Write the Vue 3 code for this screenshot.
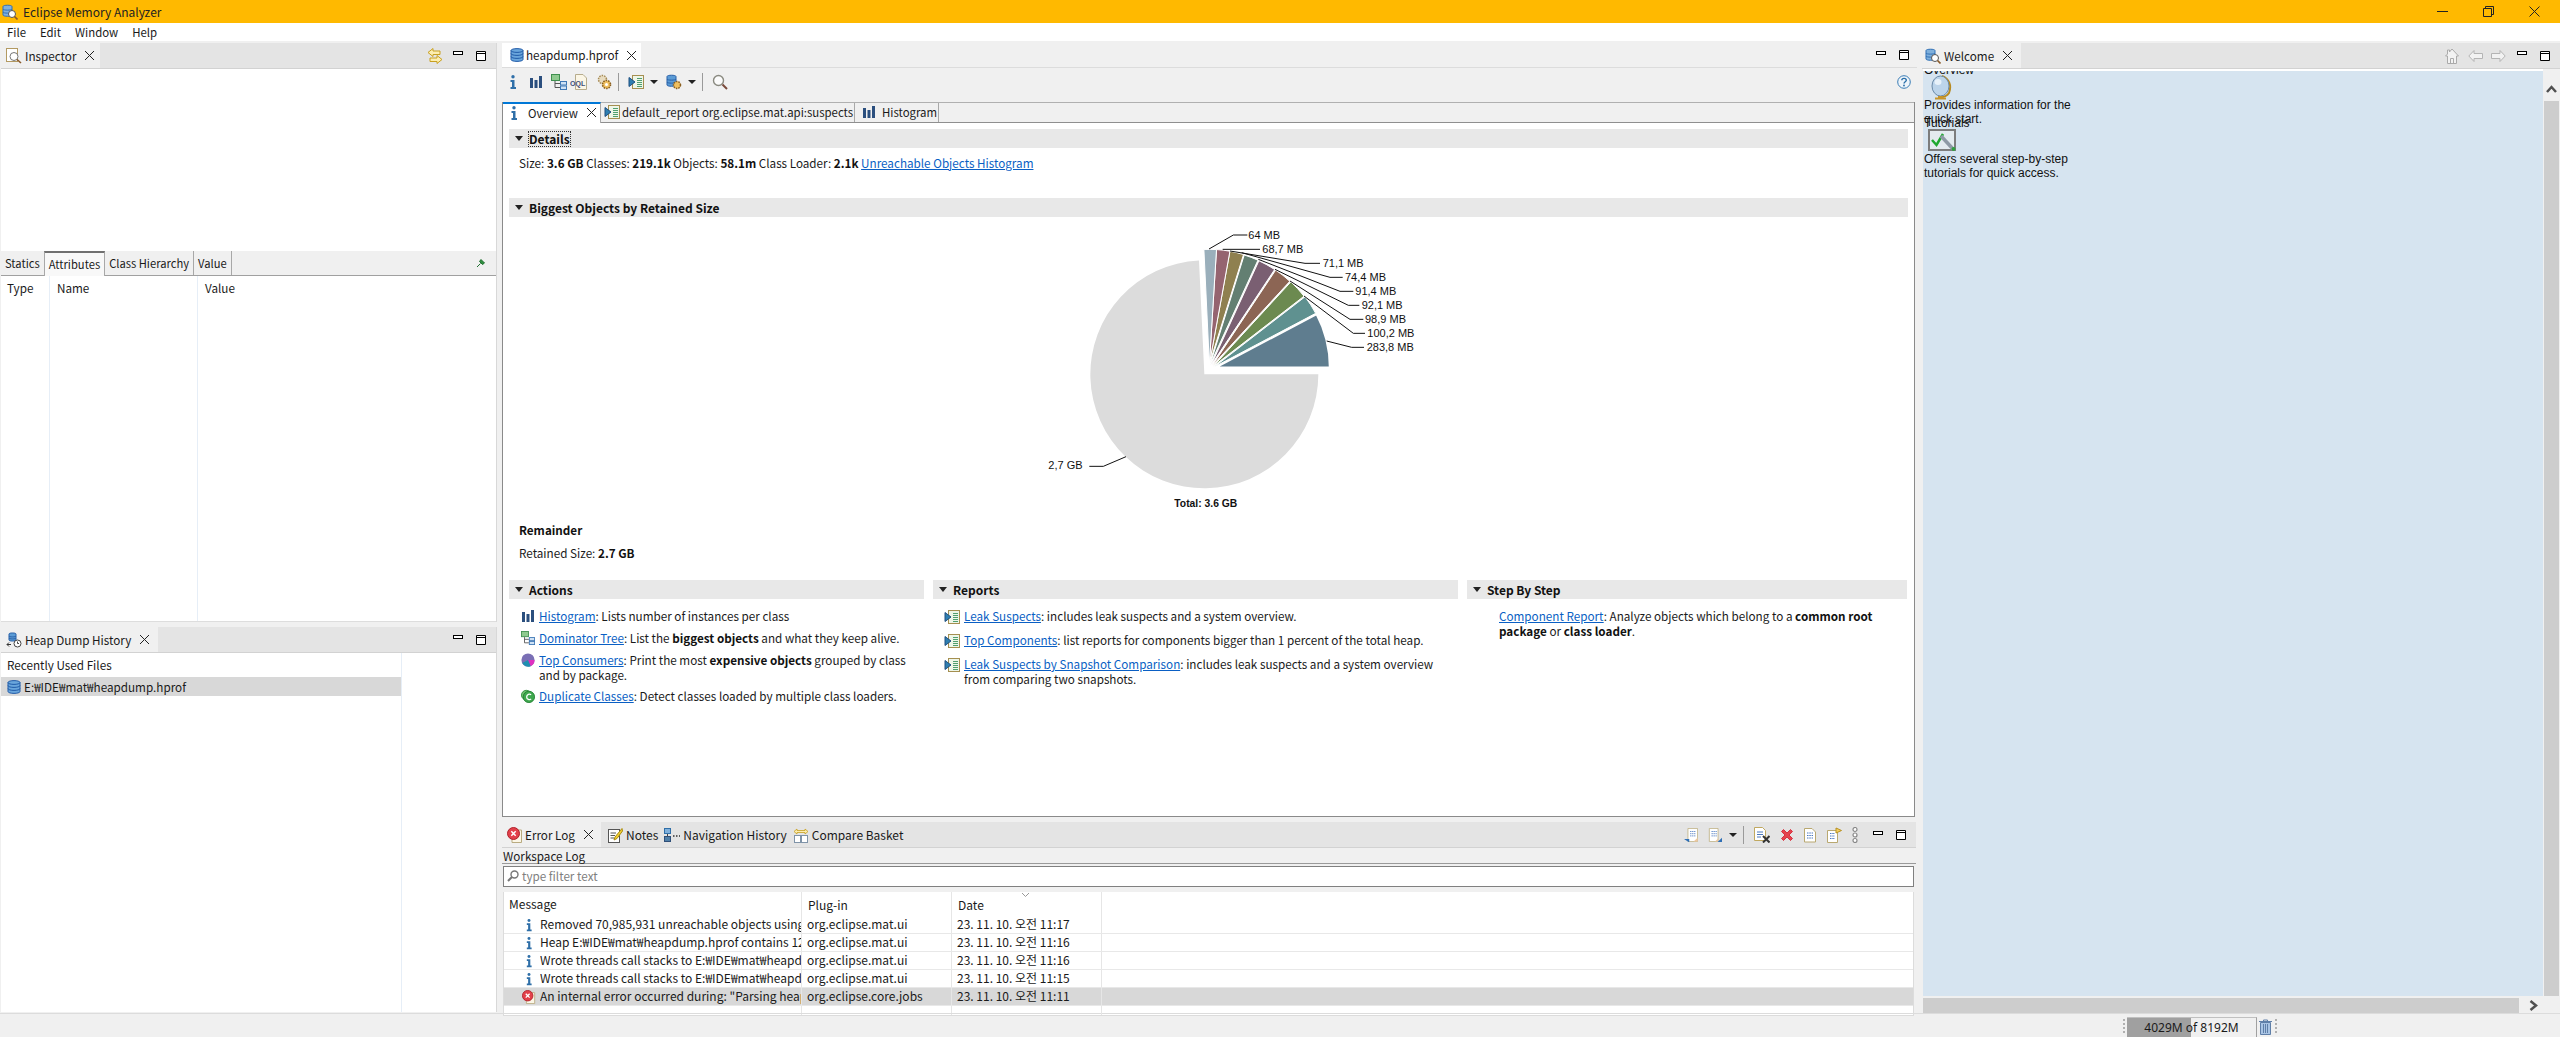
<script setup>
import { computed } from 'vue'

const R = 345
const sliceData = [
  { v: 283.8, c: '#5f7d8f' }, { v: 100.2, c: '#5f9190' }, { v: 98.9, c: '#6c8a50' },
  { v: 92.1, c: '#8c6554' }, { v: 91.4, c: '#7a5f72' }, { v: 74.4, c: '#637f72' },
  { v: 71.1, c: '#8f8050' }, { v: 68.7, c: '#956470' }, { v: 64, c: '#9aafbb' }
]
const slices = computed(() => {
  let a = 0
  const k = 92.7 / 944.6
  return sliceData.map((s, i) => {
    const t = i / (sliceData.length - 1)
    const ax = 525 - 17 * Math.min(1, t * 1.4)
    const ay = 470 - 10 * Math.min(1, t * 1.4)
    const a0 = a * Math.PI / 180
    a += s.v * k
    const a1 = a * Math.PI / 180
    const x0 = ax + R * Math.cos(a0), y0 = ay - R * Math.sin(a0)
    const x1 = ax + R * Math.cos(a1), y1 = ay - R * Math.sin(a1)
    return { c: s.c, sw: i === 0 ? 7 : 3, d: `M${ax} ${ay}L${x0.toFixed(1)} ${y0.toFixed(1)}A${R} ${R} 0 0 0 ${x1.toFixed(1)} ${y1.toFixed(1)}Z` }
  })
})
const leaders = [
  { t: '64 MB', x: 625, y: 83, p: '507,114 580,72 622,72' },
  { t: '68,7 MB', x: 667, y: 125, p: '548,115 660,115' },
  { t: '71,1 MB', x: 848, y: 167, p: '570,120 795,157 840,157' },
  { t: '74,4 MB', x: 915, y: 209, p: '605,125 870,199 908,199' },
  { t: '91,4 MB', x: 946, y: 251, p: '655,145 900,241 940,241' },
  { t: '92,1 MB', x: 965, y: 293, p: '705,175 925,283 958,283' },
  { t: '98,9 MB', x: 975, y: 335, p: '750,210 930,325 970,325' },
  { t: '100,2 MB', x: 982, y: 377, p: '792,255 940,367 975,367' },
  { t: '283,8 MB', x: 980, y: 419, p: '860,390 935,409 972,409' },
  { t: '2,7 GB', x: 25, y: 773, p: '258,737 190,766 148,766' }
]
const logRows = [
  { i: 'info', m: 'Removed 70,985,931 unreachable objects using 6,089,849,312 bytes', p: 'org.eclipse.mat.ui', d: '23. 11. 10. 오전 11:17' },
  { i: 'info', m: 'Heap E:₩IDE₩mat₩heapdump.hprof contains 12,345,678 objects', p: 'org.eclipse.mat.ui', d: '23. 11. 10. 오전 11:16' },
  { i: 'info', m: 'Wrote threads call stacks to E:₩IDE₩mat₩heapdump.threads', p: 'org.eclipse.mat.ui', d: '23. 11. 10. 오전 11:16' },
  { i: 'info', m: 'Wrote threads call stacks to E:₩IDE₩mat₩heapdump.threads', p: 'org.eclipse.mat.ui', d: '23. 11. 10. 오전 11:15' },
  { i: 'errlog', m: 'An internal error occurred during: "Parsing heap dump from E:', p: 'org.eclipse.core.jobs', d: '23. 11. 10. 오전 11:11', sel: true }
]
</script>

<template>
  <div class="app">
    <svg class="sprite" aria-hidden="true">
      <symbol id="db" viewBox="0 0 16 16"><path d="M2 3.500C2 1 14 1 14 3.500V12.500C14 15 2 15 2 12.500Z" fill="#6aa6dc" stroke="#1f5aa8"/><path d="M2 3.500C2 6 14 6 14 3.500M2 6.500C2 9 14 9 14 6.500M2 9.500C2 12 14 12 14 9.500" fill="none" stroke="#1f5aa8"/></symbol>
      <symbol id="dbsearch" viewBox="0 0 16 16"><path d="M1 2.500C1 .8 10 .8 10 2.500V11C10 12.700 1 12.700 1 11Z" fill="#7fb0dc" stroke="#2f6fb5"/><path d="M1 5C1 6.500 10 6.500 10 5M1 8C1 9.500 10 9.500 10 8" fill="none" stroke="#2f6fb5"/><circle cx="10" cy="10" r="3.500" fill="#fff" stroke="#555"/><path d="M12.500 12.500L15.500 15.500" stroke="#8a5a2a" stroke-width="1.600"/></symbol>
      <symbol id="inspector" viewBox="0 0 16 16"><rect x=".5" y=".5" width="11" height="13" fill="#fff" stroke="#b39a62"/><circle cx="8" cy="8.500" r="4" fill="#fff" stroke="#777"/><path d="M11 11.500L15 15" stroke="#8a5a2a" stroke-width="1.600"/></symbol>
      <symbol id="close" viewBox="0 0 11 11"><path d="M1 1L10 10M10 1L1 10" stroke="#222" fill="none"/></symbol>
      <symbol id="min" viewBox="0 0 10 5"><rect x=".5" y=".5" width="9" height="3" fill="#fff" stroke="#000"/></symbol>
      <symbol id="max" viewBox="0 0 10 10"><path d="M.5.5H9.500V9.500H.5ZM.5 2.500H9.500" fill="#fff" stroke="#000"/></symbol>
      <symbol id="sync" viewBox="0 0 16 16"><path d="M6 .5L1 4.500L6 8.500V6.500H13V3H6Z" fill="#fdeeb0" stroke="#c8a020"/><path d="M10 7.500L15 11.500L10 15.500V13.500H3V10H10Z" fill="#fdeeb0" stroke="#c8a020"/></symbol>
      <symbol id="pin" viewBox="0 0 10 10"><path d="M5 1.500L8.500 5L6.500 6.500L3.500 3.500ZM4.500 5.500L1 9" fill="#2f8f3f" stroke="#1f6f2f"/></symbol>
      <symbol id="hist" viewBox="0 0 16 16"><path d="M3 2C3 .6 10 .6 10 2V8C10 9.400 3 9.400 3 8Z" fill="#5b9bd5" stroke="#2860a8"/><path d="M3 4C3 5.200 10 5.200 10 4M3 6C3 7.200 10 7.200 10 6" fill="none" stroke="#2860a8"/><circle cx="11.500" cy="11.500" r="3.500" fill="#fff" stroke="#444"/><path d="M11.500 9.500V11.500H13" fill="none" stroke="#444"/><path d="M1 12.500H5M1 12.500L3 10.500M1 12.500L3 14.500" stroke="#333" fill="none"/></symbol>
      <symbol id="info" viewBox="0 0 16 16"><circle cx="8" cy="2.800" r="1.700" fill="#2f6fa8"/><path d="M5.500 6H9.500V13H11V15H5.500V13H7V8H5.500Z" fill="#2f6fa8"/></symbol>
      <symbol id="bars" viewBox="0 0 14 14"><path d="M1 3H4V13H1ZM5.500 5H8.500V13H5.500ZM10 1H13V13H10Z" fill="#2b4f7e"/></symbol>
      <symbol id="domtree" viewBox="0 0 16 16"><rect x=".5" y=".5" width="8" height="6" fill="#8fca8f" stroke="#3f8f4f"/><path d="M4 7V13.500H9M4 9.500H9" fill="none" stroke="#555"/><rect x="9.500" y="7.500" width="6" height="3.500" fill="#cfe2f5" stroke="#3f78b5"/><rect x="9.500" y="12" width="6" height="3.500" fill="#cfe2f5" stroke="#3f78b5"/></symbol>
      <symbol id="oql" viewBox="0 0 18 16"><path d="M5.500.5H13L16.500 4V15.500H5.500Z" fill="#fbf6e6" stroke="#b7ac8c"/><text x="0" y="11.500" font-size="7" font-weight="700" font-family="Liberation Sans" fill="#3d4f7a">OQL</text></symbol>
      <symbol id="gear" viewBox="0 0 16 16"><circle cx="6.500" cy="5.500" r="4" fill="#e8dcc0" stroke="#a58a55" stroke-width="1.500" stroke-dasharray="1.500 1"/><circle cx="10.500" cy="10.500" r="4" fill="#f0c060" stroke="#8a5f20" stroke-width="1.600" stroke-dasharray="1.500 1"/><circle cx="10.500" cy="10.500" r="1.500" fill="#fff"/></symbol>
      <symbol id="report" viewBox="0 0 16 16"><rect x="4.500" y="1.500" width="11" height="13" fill="#eef6e8" stroke="#a58f50"/><path d="M9 4.500H14M9 6.500H14M9 8.500H14M9 10.500H14M9 12.500H14" stroke="#4f9f6f"/><path d="M1 3.500L7 8L1 12.500Z" fill="#2f7fb0" stroke="#1f4f80"/></symbol>
      <symbol id="dbgear" viewBox="0 0 16 16"><path d="M1 2.500C1 .8 10 .8 10 2.500V11C10 12.700 1 12.700 1 11Z" fill="#5b9bd5" stroke="#2860a8"/><path d="M1 5C1 6.500 10 6.500 10 5M1 8C1 9.500 10 9.500 10 8" fill="none" stroke="#2860a8"/><circle cx="11" cy="11" r="3.500" fill="#f0c060" stroke="#8a5f20" stroke-width="1.500" stroke-dasharray="1.500 1"/></symbol>
      <symbol id="caret" viewBox="0 0 8 4"><path d="M0 0H8L4 4Z" fill="#222"/></symbol>
      <symbol id="search" viewBox="0 0 16 16"><circle cx="6.500" cy="6.500" r="5" fill="#fbfbfb" stroke="#8a8a80" stroke-width="1.400"/><path d="M10.500 10.500L15 15" stroke="#7a4a3a" stroke-width="2"/></symbol>
      <symbol id="help" viewBox="0 0 14 14"><circle cx="7" cy="7" r="6.300" fill="#eef4fa" stroke="#3a7db5"/><path d="M4.800 5.200C4.800 2.800 9.300 2.800 9.300 5.200C9.300 6.800 7 6.800 7 8.600" fill="none" stroke="#2a6fa8" stroke-width="1.400"/><circle cx="7" cy="10.500" r=".9" fill="#2a6fa8"/></symbol>
      <symbol id="pie" viewBox="0 0 16 16"><circle cx="8" cy="8" r="7.500" fill="#7a6fb5"/><path d="M8 8L15.500 8A7.500 7.500 0 0 1 11 15Z" fill="#e030c0"/><path d="M8 8L11 15A7.500 7.500 0 0 1 1.500 11.500Z" fill="#1f8fb0"/></symbol>
      <symbol id="dup" viewBox="0 0 16 16"><circle cx="6" cy="7" r="5.500" fill="#6fc06f" stroke="#2f8f3f"/><circle cx="9" cy="9" r="6.500" fill="#3fa84f" stroke="#1f7f2f"/><path d="M11.500 6.800C10 5 6.500 6 6.500 9C6.500 12 10 13 11.500 11.200" fill="none" stroke="#fff" stroke-width="1.500"/></symbol>
      <symbol id="errlog" viewBox="0 0 16 16"><path d="M5 3H14.500V15.500H5Z" fill="#fbf6e6" stroke="#b9ab80"/><circle cx="6.500" cy="6.500" r="6" fill="#e2404a" stroke="#b0202a"/><path d="M4.300 4.300L8.700 8.700M8.700 4.300L4.300 8.700" stroke="#fff" stroke-width="1.500"/></symbol>
      <symbol id="notes" viewBox="0 0 16 16"><rect x="1.500" y="2.500" width="11" height="13" fill="#fff" stroke="#555"/><path d="M3.500 6H9M3.500 8.500H8M3.500 11H7" stroke="#555"/><path d="M15 1.500L8 10L7 13L10 11.500L15.500 4Z" fill="#f2cf30" stroke="#a88a10"/></symbol>
      <symbol id="nav" viewBox="0 0 16 16"><rect x=".5" y="1.500" width="6" height="5" fill="#7fb0dc" stroke="#2f6fa8"/><rect x=".5" y="9.500" width="6" height="5" fill="#4f7fa8" stroke="#2f4f78"/><path d="M3.500 7V9" stroke="#444"/><path d="M9 9H10.500M12 9H13.500M15 9H16" stroke="#333" stroke-width="1.500"/></symbol>
      <symbol id="compare" viewBox="0 0 16 16"><path d="M1 4.500L4 2V3.500H12V2L15 4.500L12 7V5.500H4V7Z" fill="#fdeeb0" stroke="#c8a020" stroke-width=".8"/><rect x="1.500" y="8.500" width="6" height="7" fill="#fff" stroke="#7f93a8"/><rect x="8.500" y="8.500" width="6" height="7" fill="#fff" stroke="#7f93a8"/></symbol>
      <symbol id="logimport" viewBox="0 0 16 16"><path d="M4.500.5H15.500V15.500H4.500Z" fill="#fff" stroke="#c0b488"/><path d="M7 4H13M7 6.500H13M7 9H13" stroke="#4a78c0" stroke-dasharray="1.500 .8"/><path d="M11 15.500L15.500 11V15.500Z" fill="#f0c8a0"/><path d="M0 12.500H6L6 16.500Z" fill="#2f6fb5"/></symbol>
      <symbol id="logexport" viewBox="0 0 16 16"><path d="M1.500.5H11.500V15.500H1.500Z" fill="#fff" stroke="#c0b488"/><path d="M4 4H10M4 6.500H10M4 9H10" stroke="#4a78c0" stroke-dasharray="1.500 .8"/><path d="M8 15.500L11.500 12V15.500Z" fill="#f0c8a0"/><path d="M16 11V16H11Z" fill="#2f6fb5"/></symbol>
      <symbol id="logclear" viewBox="0 0 16 16"><path d="M.5.500H8.500L11.500 3.500V13.500H.5Z" fill="#fff" stroke="#c0a860"/><path d="M3 5H9M3 7.500H9M3 10H7" stroke="#4a78c0"/><path d="M9 9L15.500 15.500M15.500 9L9 15.500" stroke="#333" stroke-width="2"/></symbol>
      <symbol id="redx" viewBox="0 0 14 14"><path d="M1.500 3.500L3.500 1.500L7 5L10.500 1.500L12.500 3.500L9 7L12.500 10.500L10.500 12.500L7 9L3.500 12.500L1.500 10.500L5 7Z" fill="#e4444e" stroke="#d83040"/></symbol>
      <symbol id="logdoc" viewBox="0 0 12 16"><path d="M.5 1.500H8L11.500 5V15H.5Z" fill="#fff" stroke="#b9a870"/><path d="M3 6H9M3 8.500H9M3 11H9" stroke="#4a78c0" stroke-dasharray="1.500 .8"/></symbol>
      <symbol id="logopen" viewBox="0 0 16 16"><path d="M1.500 3.500H11.500V15.500H1.500Z" fill="#fff" stroke="#b9a870"/><path d="M4 6.500H9M4 9H9M4 11.500H9" stroke="#4a78c0" stroke-dasharray="1.500 .8"/><path d="M10 1V6L15.500 3.500Z" fill="#f4d060" stroke="#b89020"/></symbol>
      <symbol id="chain" viewBox="0 0 6 16"><circle cx="3" cy="2.500" r="2" fill="#fff" stroke="#888" stroke-width="1.200"/><circle cx="3" cy="8" r="2" fill="#fff" stroke="#888" stroke-width="1.200"/><circle cx="3" cy="13.500" r="2" fill="#fff" stroke="#888" stroke-width="1.200"/></symbol>
      <symbol id="home" viewBox="0 0 14 16"><path d="M7 1L13.500 8H11.500V15.500H2.500V8H.5L2.500 6V2H4.500V4Z" fill="#f2f2f2" stroke="#aaa"/><path d="M5.500 15V10.500H8.500V15" fill="none" stroke="#aaa"/></symbol>
      <symbol id="back" viewBox="0 0 15 12"><path d="M6 .5L.8 6L6 11.500V8.500H14.500V3.500H6Z" fill="#f2f2f2" stroke="#b4b4b4"/></symbol>
      <symbol id="fwd" viewBox="0 0 15 12"><path d="M9 .5L14.200 6L9 11.500V8.500H.5V3.500H9Z" fill="#f2f2f2" stroke="#b4b4b4"/></symbol>
      <symbol id="globe" viewBox="0 0 21 25"><path d="M11 1C18 4 21 10 18 18C16 21 13 22 10 22" fill="none" stroke="#b88a20" stroke-width="2"/><ellipse cx="9.500" cy="11" rx="8.500" ry="10" fill="#bcd4ea" stroke="#6a8aa8"/><ellipse cx="7" cy="7" rx="3.500" ry="3" fill="#e8f2fa"/><path d="M4 24.500H15V22.500H12V21H7V22.500H4Z" fill="#c8952a"/></symbol>
      <symbol id="tutor" viewBox="0 0 28 22"><rect x="1" y="1" width="26" height="20" fill="#e4ebef" stroke="#7d7d7d" stroke-width="2"/><path d="M4 11L8.500 16L15 5" fill="none" stroke="#1fa82f" stroke-width="2.500"/><path d="M13 7L25 20" stroke="#8f9aa5" stroke-width="3.500"/><circle cx="25.500" cy="20" r="2" fill="#2f9f3f"/></symbol>
      <symbol id="trash" viewBox="0 0 13 16"><path d="M0 2.500H13M4.500 2.500V1H8.500V2.500" fill="none" stroke="#5f7fa8"/><path d="M1.500 3.500H11.500V15.500H1.500Z" fill="#a9c4e4" stroke="#5f7fa8"/><path d="M4.500 5V14M6.500 5V14M8.500 5V14" stroke="#5f7fa8"/></symbol>
      <symbol id="glass" viewBox="0 0 12 12"><circle cx="7.500" cy="4.500" r="3.500" fill="#fff" stroke="#777" stroke-width="1.400"/><path d="M5 7L1 11" stroke="#777" stroke-width="2"/></symbol>
    </svg>

    <header class="title">
      <svg class="ic16 titleicon"><use href="#dbsearch" /></svg>
      <span class="titletext">Eclipse Memory Analyzer</span>
      <div class="winctl">
        <svg width="11" height="11" viewBox="0 0 11 11"><path d="M0 5.500H11" stroke="#222" /></svg>
        <svg width="11" height="11" viewBox="0 0 11 11"><path d="M.5 2.500H8.500V10.500H.5ZM2.500 2.500V.5H10.500V8.500H8.500" fill="none" stroke="#222" /></svg>
        <svg width="11" height="11" viewBox="0 0 11 11"><path d="M.5.5L10.500 10.500M10.500.5L.5 10.500" stroke="#222" /></svg>
      </div>
    </header>
    <nav class="menu"><span>File</span><span>Edit</span><span>Window</span><span>Help</span></nav>

    <main class="main">
      <section class="col col-left">
        <div class="panel inspector">
          <div class="tabbar">
            <div class="vtab ins-tab"><svg class="ic16"><use href="#inspector" /></svg><span>Inspector</span><svg class="ic-x"><use href="#close" /></svg></div>
            <div class="bar-tools">
              <svg class="ic16 sync-ic"><use href="#sync" /></svg>
              <svg class="ic-min"><use href="#min" /></svg>
              <svg class="ic-max"><use href="#max" /></svg>
            </div>
          </div>
          <div class="ins-blank"></div>
          <div class="subtabs">
            <span class="st st-first">Statics</span><span class="st st-on">Attributes</span><span class="st">Class Hierarchy</span><span class="st">Value</span>
            <svg class="pin"><use href="#pin" /></svg>
          </div>
          <div class="attr-table">
            <span class="c1">Type</span><span class="c2">Name</span><span class="c3">Value</span>
          </div>
        </div>
        <div class="panel history">
          <div class="tabbar">
            <div class="vtab hist-tab"><svg class="ic16"><use href="#hist" /></svg><span>Heap Dump History</span><svg class="ic-x"><use href="#close" /></svg></div>
            <div class="bar-tools">
              <svg class="ic-min"><use href="#min" /></svg>
              <svg class="ic-max"><use href="#max" /></svg>
            </div>
          </div>
          <div class="hist-body">
            <div class="hist-list">
              <div class="hist-head">Recently Used Files</div>
              <div class="hist-row"><svg class="ic16"><use href="#db" /></svg><span>E:₩IDE₩mat₩heapdump.hprof</span></div>
            </div>
          </div>
        </div>
      </section>

      <section class="col col-mid">
        <div class="editor">
          <div class="ed-tabbar">
            <div class="ed-tab"><svg class="ic16"><use href="#db" /></svg><span>heapdump.hprof</span><svg class="ic-x"><use href="#close" /></svg></div>
            <div class="bar-tools ed-tools">
              <svg class="ic-min"><use href="#min" /></svg>
              <svg class="ic-max"><use href="#max" /></svg>
            </div>
          </div>
          <div class="ed-toolbar">
            <svg class="ic16 t1"><use href="#info" /></svg>
            <svg class="ic14 t2"><use href="#bars" /></svg>
            <svg class="ic16 t3"><use href="#domtree" /></svg>
            <svg class="oql-ic t4"><use href="#oql" /></svg>
            <svg class="ic16 t5"><use href="#gear" /></svg>
            <i class="sep t6"></i>
            <svg class="ic16 t7"><use href="#report" /></svg>
            <svg class="ic-caret t8"><use href="#caret" /></svg>
            <svg class="ic16 t9"><use href="#dbgear" /></svg>
            <svg class="ic-caret t8"><use href="#caret" /></svg>
            <i class="sep t6"></i>
            <svg class="ic16 t10"><use href="#search" /></svg>
            <svg class="ic-help"><use href="#help" /></svg>
          </div>
          <div class="pane">
            <div class="pane-tabs">
              <div class="ptab ptab-on"><svg class="ic16"><use href="#info" /></svg><span>Overview</span><svg class="ic-x"><use href="#close" /></svg></div>
              <div class="ptab ptab-rep"><svg class="ic16"><use href="#report" /></svg><span>default_report org.eclipse.mat.api:suspects</span></div>
              <div class="ptab ptab-his"><svg class="ic14"><use href="#bars" /></svg><span>Histogram</span></div>
            </div>
            <div class="overview">
              <h3 class="sec sec-details"><i class="tri"></i><span class="focus">Details</span></h3>
              <p class="size-line">Size: <b>3.6 GB</b> Classes: <b>219.1k</b> Objects: <b>58.1m</b> Class Loader: <b>2.1k</b> <a>Unreachable Objects Histogram</a></p>
              <h3 class="sec sec-big"><i class="tri"></i><span>Biggest Objects by Retained Size</span></h3>
              <svg class="chart" viewBox="0 0 1260 900" width="420" height="300">
                <path d="M493 490L835 490A342 342 0 1 1 477 148.400Z" fill="#dcdcdc" />
                <path v-for="(s, i) in slices" :key="i" :d="s.d" :fill="s.c" stroke="#fff" :stroke-width="s.sw" stroke-linejoin="round" />
                <g v-for="l in leaders" :key="l.t">
                  <polyline :points="l.p" fill="none" stroke="#111" stroke-width="3" />
                  <text :x="l.x" :y="l.y" font-size="33" font-family="Liberation Sans" fill="#111">{{ l.t }}</text>
                </g>
                <text x="403" y="887" font-size="31" font-weight="700" font-family="Liberation Sans" fill="#111">Total: 3.6 GB</text>
              </svg>
              <div class="remainder">
                <div class="rem-h">Remainder</div>
                <div class="rem-v">Retained Size: <b>2.7 GB</b></div>
              </div>
              <div class="three">
                <div class="c-act">
                  <h3 class="sec"><i class="tri"></i><span>Actions</span></h3>
                  <ul class="items">
                    <li><svg class="ic14 bar-i"><use href="#bars" /></svg><p><a>Histogram</a>: Lists number of instances per class</p></li>
                    <li><svg class="ic14"><use href="#domtree" /></svg><p><a>Dominator Tree</a>: List the <b>biggest objects</b> and what they keep alive.</p></li>
                    <li><svg class="ic14"><use href="#pie" /></svg><p><a>Top Consumers</a>: Print the most <b>expensive objects</b> grouped by class and by package.</p></li>
                    <li><svg class="ic14"><use href="#dup" /></svg><p><a>Duplicate Classes</a>: Detect classes loaded by multiple class loaders.</p></li>
                  </ul>
                </div>
                <div class="c-rep">
                  <h3 class="sec"><i class="tri"></i><span>Reports</span></h3>
                  <ul class="items rep">
                    <li><svg class="ic16"><use href="#report" /></svg><p><a>Leak Suspects</a>: includes leak suspects and a system overview.</p></li>
                    <li><svg class="ic16"><use href="#report" /></svg><p><a>Top Components</a>: list reports for components bigger than 1 percent of the total heap.</p></li>
                    <li><svg class="ic16"><use href="#report" /></svg><p><a>Leak Suspects by Snapshot Comparison</a>: includes leak suspects and a system overview from comparing two snapshots.</p></li>
                  </ul>
                </div>
                <div class="c-step">
                  <h3 class="sec"><i class="tri"></i><span>Step By Step</span></h3>
                  <ul class="items step">
                    <li><p><a>Component Report</a>: Analyze objects which belong to a <b>common root package</b> or <b>class loader</b>.</p></li>
                  </ul>
                </div>
              </div>
            </div>
          </div>
        </div>

        <div class="panel log">
          <div class="tabbar">
            <div class="vtab log-tab"><svg class="ic16"><use href="#errlog" /></svg><span>Error Log</span><svg class="ic-x"><use href="#close" /></svg></div>
            <div class="ltab"><svg class="ic16"><use href="#notes" /></svg><span>Notes</span></div>
            <div class="ltab"><svg class="ic16"><use href="#nav" /></svg><span>Navigation History</span></div>
            <div class="ltab"><svg class="ic16"><use href="#compare" /></svg><span>Compare Basket</span></div>
            <div class="log-tools">
              <svg class="ic14 lt1"><use href="#logimport" /></svg>
              <svg class="ic14 lt2"><use href="#logexport" /></svg>
              <svg class="ic-caret lt3"><use href="#caret" /></svg>
              <i class="sep lt4"></i>
              <svg class="ic16 lt5"><use href="#logclear" /></svg>
              <svg class="ic14 lt6"><use href="#redx" /></svg>
              <svg class="logdoc lt7"><use href="#logdoc" /></svg>
              <svg class="ic16 lt8"><use href="#logopen" /></svg>
              <svg class="chain lt9"><use href="#chain" /></svg>
              <svg class="ic-min lt10"><use href="#min" /></svg>
              <svg class="ic-max lt11"><use href="#max" /></svg>
            </div>
          </div>
          <div class="ws-label">Workspace Log</div>
          <div class="filter"><svg class="glass"><use href="#glass" /></svg><span>type filter text</span></div>
          <div class="log-table">
            <div class="lrow lhead">
              <div class="lc lm">Message</div><div class="lc lp">Plug-in</div><div class="lc ld">Date<svg class="sort" width="7" height="4" viewBox="0 0 7 4"><path d="M0 0L3.500 3.500L7 0" fill="none" stroke="#999" /></svg></div><div class="lc lx"></div>
            </div>
            <div v-for="(r, i) in logRows" :key="i" class="lrow" :class="{ 'lrow-sel': r.sel }">
              <div class="lc lm"><svg class="ic14 lic"><use :href="'#' + r.i" /></svg><span class="clip">{{ r.m }}</span></div>
              <div class="lc lp">{{ r.p }}</div>
              <div class="lc ld">{{ r.d }}</div>
              <div class="lc lx"></div>
            </div>
            <div class="lrow lblank"><div class="lc lm"></div><div class="lc lp"></div><div class="lc ld"></div><div class="lc lx"></div></div>
          </div>
        </div>
      </section>

      <section class="col col-right">
        <div class="panel welcome">
          <div class="tabbar">
            <div class="vtab wel-tab"><svg class="ic16"><use href="#dbsearch" /></svg><span>Welcome</span><svg class="ic-x"><use href="#close" /></svg></div>
            <div class="bar-tools wel-tools">
              <svg class="w-home"><use href="#home" /></svg>
              <svg class="w-arrow"><use href="#back" /></svg>
              <svg class="w-arrow"><use href="#fwd" /></svg>
              <svg class="ic-min"><use href="#min" /></svg>
              <svg class="ic-max"><use href="#max" /></svg>
            </div>
          </div>
          <div class="wel-body">
            <div class="wel-view">
              <div class="wel-canvas">
                <div class="wel-t1">Overview</div>
                <svg class="globe"><use href="#globe" /></svg>
                <div class="wel-d">Provides information for the<br />quick start.</div>
                <div class="wel-t2">Tutorials</div>
                <svg class="tutor"><use href="#tutor" /></svg>
                <div class="wel-d">Offers several step-by-step<br />tutorials for quick access.</div>
              </div>
              <div class="vscroll"><svg width="11" height="8" viewBox="0 0 11 8"><path d="M1 7L5.500 2L10 7" fill="none" stroke="#505050" stroke-width="2.500" /></svg><div class="vthumb"></div></div>
            </div>
            <div class="hscroll">
              <div class="hthumb"></div>
              <svg width="9" height="11" viewBox="0 0 9 11"><path d="M1.500 1L7 5.500L1.500 10" fill="none" stroke="#505050" stroke-width="2.500" /></svg>
            </div>
          </div>
        </div>
      </section>
    </main>

    <footer class="status">
      <i class="grip"></i>
      <div class="heap"><div class="heap-fill"></div><span>4029M of 8192M</span></div>
      <svg class="trash"><use href="#trash" /></svg>
      <i class="grip"></i>
    </footer>
  </div>
</template>

<style>
html, body { margin: 0; background: #f0f0f0; }
</style>

<style scoped>
.app { width: 2560px; height: 1037px; display: flex; flex-direction: column; background: #f0f0f0; overflow: hidden; font: 11.7px/16px "Noto Sans CJK KR", "Noto Sans", sans-serif; color: #1a1a1a; position: relative; }
.sprite { position: absolute; width: 0; height: 0; }
svg { display: block; flex: none; }
p, h3, ul { margin: 0; padding: 0; }
li { list-style: none; }
b { font-weight: 700; color: #111; }
a { color: #0a5fc4; text-decoration: underline; }
.ic16 { width: 16px; height: 16px; }
.ic14 { width: 14px; height: 14px; }
.ic-x { width: 11px; height: 11px; }
.ic-min { width: 10px; height: 5px; }
.ic-max { width: 10px; height: 10px; }
.ic-caret { width: 8px; height: 4px; }
.sep { display: block; width: 1px; height: 18px; background: #9a9a9a; flex: none; }

.title { height: 23px; background: #ffb900; display: flex; align-items: center; padding-left: 2px; flex: none; font-size: 12px; }
.titleicon { margin-right: 5px; }
.titletext { color: #222; }
.winctl { margin-left: auto; display: flex; gap: 35px; padding-right: 20px; }
.menu { height: 18px; background: #fff; display: flex; gap: 14px; padding-left: 7px; align-items: center; flex: none; font-size: 11.4px; }

.main { flex: none; height: 972px; display: flex; padding-top: 2px; box-sizing: border-box; }
.col { display: flex; flex-direction: column; gap: 5px; box-sizing: border-box; }
.col-left { width: 497px; padding-left: 1px; }
.col-mid { width: 1415px; margin-left: 5px; }
.col-right { width: 638px; margin-left: 5px; }

.panel { display: flex; flex-direction: column; background: #fff; border-right: 1px solid #d8d8d8; box-sizing: border-box; }
.tabbar { height: 26px; flex: none; display: flex; background: #e4e4e4; border-bottom: 1px solid #d2d2d2; box-sizing: border-box; align-items: stretch; }
.vtab { display: flex; align-items: center; background: #f0f0f0; box-sizing: border-box; padding-left: 5px; }
.vtab > span { margin-left: 3px; }
.vtab .ic-x { margin-left: 8px; }
.ins-tab { width: 99px; }
.hist-tab { width: 157px; }
.bar-tools { margin-left: auto; display: flex; align-items: center; }
.sync-ic { margin-right: 10px; }
.bar-tools .ic-min { margin-top: -4px; }
.bar-tools .ic-max { margin-left: 13px; margin-right: 10px; }

.inspector { height: 579px; }
.ins-blank { height: 182px; flex: none; }
.subtabs { height: 25px; flex: none; background: #f0f0f0; display: flex; align-items: stretch; border-bottom: 1px solid #a0a0a0; box-sizing: border-box; position: relative; }
.st { padding: 0 4px; line-height: 25px; border-right: 1px solid #a8a8a8; font-size: 11.2px; }
.st-first { border-right: 0; }
.st-on { background: #f8f8f8; border-top: 2px solid #707070; border-left: 1px solid #a8a8a8; line-height: 23px; margin-bottom: -1px; }
.pin { width: 10px; height: 10px; margin: auto 10px auto auto; }
.attr-table { flex: 1; display: grid; grid-template-columns: 49px 148px 1fr; border-bottom: 1px solid #ddd; }
.attr-table span { padding: 4px 0 0 6px; border-right: 1px solid #e6eef7; }
.c2 { padding-left: 7px !important; }
.c3 { padding-left: 7px !important; border-right: 0 !important; }

.history { height: 385px; }
.hist-body { flex: 1; display: flex; }
.hist-list { width: 400px; border-right: 1px solid #e6eef7; }
.hist-head { height: 24px; line-height: 22px; padding: 1px 0 0 6px; box-sizing: border-box; margin-bottom: 0; }
.hist-row { height: 19px; background: #d8d8d8; display: flex; align-items: center; padding-left: 5px; gap: 2px; }

.editor { height: 774px; display: flex; flex-direction: column; }
.ed-tabbar { height: 25px; flex: none; display: flex; background: #f0f0f0; border-bottom: 1px solid #dcdcdc; box-sizing: border-box; }
.ed-tab { width: 139px; background: #fff; display: flex; align-items: center; padding-left: 7px; box-sizing: border-box; }
.ed-tab > span { margin-left: 1px; }
.ed-tab .ic-x { margin-left: 8px; }
.ed-tools .ic-max { margin-right: 8px; }
.ed-toolbar { height: 34px; flex: none; display: flex; align-items: center; background: #f0f0f0; padding: 0 0 6px 3px; box-sizing: border-box; }
.t1 { margin-left: 0; }
.t2 { margin-left: 8px; }
.t3 { margin-left: 8px; }
.oql-ic { width: 18px; height: 16px; margin-left: 3px; }
.t5 { margin-left: 8px; }
.t6 { margin-left: 6px; }
.t7 { margin-left: 9px; }
.t8 { margin-left: 6px; }
.t9 { margin-left: 8px; }
.t10 { margin-left: 9px; }
.ic-help { width: 14px; height: 14px; margin-left: auto; margin-right: 6px; }

.pane { flex: 1; min-height: 0; margin-right: 2px; display: flex; flex-direction: column; border-left: 1px solid #8a8a8a; border-right: 1px solid #8a8a8a; border-bottom: 1px solid #8a8a8a; background: #fff; box-sizing: border-box; }
.pane-tabs { height: 21px; flex: none; display: flex; background: #f0f0f0; border-bottom: 1px solid #8f8f8f; border-top: 1px solid #b0b0b0; box-sizing: border-box; font-size: 11.4px; }
.ptab { display: flex; align-items: center; box-sizing: border-box; border-right: 1px solid #a8a8a8; padding-bottom: 2px; }
.ptab-on { width: 98px; background: #fff; border-top: 2px solid #0078d7; margin-top: -1px; margin-bottom: -1px; padding-left: 3px; }
.ptab-on > span { margin-left: 6px; }
.ptab-on .ic-x { margin-left: 8px; }
.ptab-rep { width: 254px; padding-left: 3px; }
.ptab-rep > span { margin-left: 2px; white-space: nowrap; }
.ptab-his { width: 84px; padding-left: 7px; }
.ptab-his > span { margin-left: 6px; }

.overview { flex: 1; padding: 6px 6px 0 6px; min-height: 0; overflow: hidden; }
.sec { height: 19px; background: #e8e8e8; display: flex; align-items: center; font-size: 12px; font-weight: 700; color: #111; padding-left: 6px; }
.tri { display: block; width: 0; height: 0; border: 4px solid transparent; border-top: 5px solid #222; border-bottom: 0; margin-right: 6px; }
.focus { outline: 1px dotted #333; line-height: 14px; }
.size-line { padding: 7px 0 0 10px; height: 19px; }
.sec-big { margin-top: 24px; }
.chart { margin: -6px 0 0 531px; }
.remainder { padding: 0 0 0 10px; }
.rem-h { font-weight: 700; color: #111; margin-top: 10px; height: 23px; line-height: 18px; }
.rem-v { height: 20px; line-height: 18px; }
.three { display: flex; gap: 9px; margin-top: 16px; }
.c-act { width: 415px; }
.c-rep { width: 525px; }
.c-step { width: 440px; }
.items { padding-top: 9px; }
.items li { display: flex; align-items: flex-start; margin-bottom: 7px; padding-left: 12px; }
.items li:last-child { margin-top: -1px; }
.items li svg { margin-right: 4px; margin-top: 1px; }
.items p { line-height: 15px; }
.rep li { padding-left: 11px; }
.rep li:last-child { margin-top: 0; }
.step li:last-child { margin-top: 0; }
.step p { padding-left: 20px; width: 400px; }

.log { height: 191px; border-right: 0; background: #f0f0f0; margin-right: 1px; }
.ltab { display: flex; align-items: center; margin-left: 6px; gap: 3px; font-size: 12px; }
.log-tab { width: 99px; padding-left: 5px; }
.log-tab > span { margin-left: 2px; }
.log-tools { margin-left: auto; display: flex; align-items: center; padding-right: 10px; position: relative; }
.lt2, .lt5, .lt6, .lt7, .lt8, .lt9, .lt10, .lt11 { margin-left: 10px; }
.lt3 { margin-left: 7px; }
.lt4 { margin-left: 6px; }
.logdoc { width: 12px; height: 16px; }
.chain { width: 6px; height: 16px; }
.lt10 { margin-left: 15px; margin-top: -2px; }
.lt11 { margin-left: 13px; }
.ws-label { height: 15px; line-height: 15px; border-bottom: 1px solid #9a9a9a; flex: none; box-sizing: content-box; padding-left: 1px; }
.filter { height: 21px; margin: 2px 2px 0 1px; background: #fff; border: 1px solid #808080; box-sizing: border-box; display: flex; align-items: center; gap: 3px; color: #808080; flex: none; padding: 0 0 2px 3px; }
.glass { width: 12px; height: 12px; }
.log-table { margin: 5px 2px 0 1px; background: #fff; border-bottom: 1px solid #dcdcdc; border-left: 1px solid #dcdcdc; border-right: 1px solid #dcdcdc; flex: none; }
.lrow { display: flex; height: 18px; border-bottom: 1px solid #e8e8e8; box-sizing: border-box; font-size: 12px; }
.lhead { height: 24px; border-bottom: 0; align-items: stretch; line-height: 26px; }
.lblank { height: 9px; border-bottom: 0; }
.lrow-sel { background: #d8d8d8; }
.lc { box-sizing: border-box; border-right: 1px solid #e6e6e6; white-space: nowrap; overflow: hidden; }
.lm { width: 298px; display: flex; align-items: center; padding-left: 5px; }
.lhead .lm { padding-left: 5px; }
.lrow:not(.lhead) .lm { padding-left: 18px; }
.lic { margin-right: 4px; }
.clip { overflow: hidden; line-height: 15px; padding-bottom: 2px; }
.lp { width: 150px; padding-left: 5px; line-height: 15px; }
.lhead .lp { padding-left: 6px; line-height: 26px; }
.ld { width: 150px; padding-left: 5px; line-height: 15px; position: relative; }
.lhead .ld { padding-left: 6px; line-height: 26px; }
.sort { position: absolute; left: 70px; top: 1px; }
.lx { flex: 1; border-right: 0; }

.welcome { height: 970px; border-right: 0; background: #f0f0f0; }
.wel-tab { width: 99px; padding-left: 3px; }
.wel-tools .w-home { width: 14px; height: 16px; margin-right: 9px; }
.wel-tools .w-arrow { width: 15px; height: 12px; margin-right: 8px; }
.wel-tools .ic-min { margin-left: 3px; }
.wel-tools .ic-max { margin-right: 10px; }
.wel-body { flex: 1; display: flex; flex-direction: column; min-height: 0; }
.wel-view { flex: 1; min-height: 0; display: flex; background: #f0f0f0; }
.wel-canvas { width: 620px; margin-left: 1px; background: #d6e4f0; overflow: hidden; border-top: 2px solid #fff; box-sizing: border-box; color: #111; font: 12px/14px "Liberation Sans", Arial, sans-serif; padding-left: 1px; height: 100%; }
.wel-t1 { margin: -8px 0 -2px; }
.globe { width: 21px; height: 25px; margin: 0 0 -2px 7px; }
.wel-t2 { margin: -10px 0 -1px; }
.tutor { width: 28px; height: 22px; margin: 0 0 1px 4px; }
.vscroll { width: 15px; background: #f0f0f0; display: flex; flex-direction: column; align-items: center; margin-left: 1px; }
.vscroll svg { margin-top: 16px; }
.vthumb { flex: 1; width: 15px; background: #cdcdcd; margin-top: 8px; }
.hscroll { height: 16px; flex: none; display: flex; align-items: center; margin-top: 1px; padding-left: 1px; }
.hthumb { width: 596px; height: 15px; background: #cdcdcd; }
.hscroll svg { margin-left: 10px; }

.status { height: 24px; flex: none; display: flex; align-items: center; padding-left: 2123px; border-top: 1px solid #dcdcdc; box-sizing: border-box; }
.grip { display: block; width: 2px; height: 14px; margin: 0 2px 0 0; background: repeating-linear-gradient(#b0b0b0 0 2px, transparent 2px 4px); flex: none; }
.heap { width: 130px; height: 21px; margin-top: 3px; position: relative; background: #f0f0f0; border-top: 1px solid #c0c0c0; border-right: 1px solid #a0a0a0; box-sizing: border-box; text-align: center; font: 12px/20px "Noto Sans", sans-serif; }
.heap-fill { position: absolute; left: 0; top: 0; bottom: 0; width: 64px; background: #a0a0a0; }
.heap span { position: relative; }
.trash { width: 13px; height: 16px; margin: 2px 3px 0 2px; }
</style>
